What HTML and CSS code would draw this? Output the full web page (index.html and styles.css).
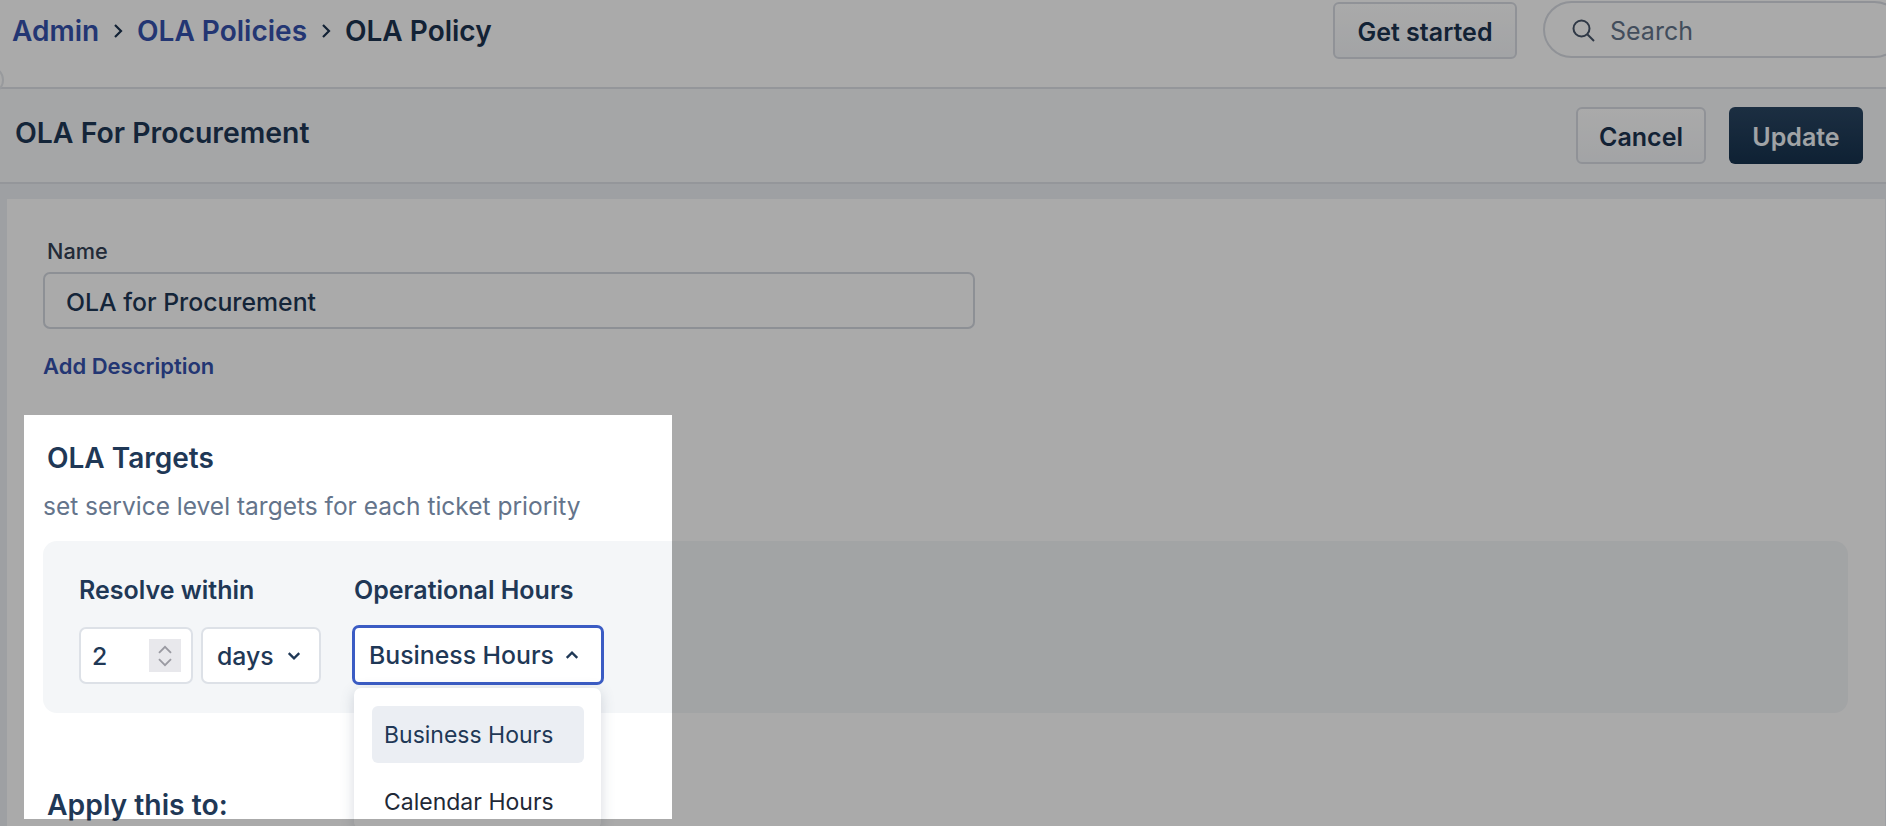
FILE: index.html
```html
<!DOCTYPE html>
<html lang="en">
<head>
  <meta charset="UTF-8">
  <title>OLA Policy</title>
  <link rel="stylesheet" href="styles.css">
</head>
<body>

  <div class="page">
    <header class="topbar">
      <nav class="crumbs">
        <a class="crumb-link">Admin</a>
        <svg class="crumb-sep" viewBox="0 0 12 16"><path d="M3 2l6 6-6 6"/></svg>
        <a class="crumb-link">OLA Policies</a>
        <svg class="crumb-sep" viewBox="0 0 12 16"><path d="M3 2l6 6-6 6"/></svg>
        <span class="crumb-current">OLA Policy</span>
      </nav>
      <button class="btn btn-started">Get started</button>
      <div class="search">
        <svg class="search-icon" viewBox="0 0 24 24"><circle cx="10.5" cy="10.5" r="8"/><path d="M16.5 16.5L23 23"/></svg>
        <span>Search</span>
      </div>
      <span class="collapse-handle"></span>
    </header>

    <section class="title-bar">
      <h1>OLA For Procurement</h1>
      <button class="btn btn-cancel">Cancel</button>
      <button class="btn btn-update">Update</button>
    </section>

    <main class="panel">
      <label class="name-label">Name</label>
      <div class="name-input">OLA for Procurement</div>
      <a class="add-desc">Add Description</a>

      <h2 class="targets-title">OLA Targets</h2>
      <p class="targets-sub">set service level targets for each ticket priority</p>

      <div class="targets-box">
        <div class="field">
          <div class="field-label">Resolve within</div>
          <div class="field-row">
            <div class="control number">
              <span>2</span>
              <span class="stepper">
                <svg viewBox="0 0 12 8"><path d="M1.500 6.500L6 2l4.500 4.500"/></svg>
                <svg viewBox="0 0 12 8"><path d="M1.500 1.500L6 6l4.500-4.500"/></svg>
              </span>
            </div>
            <div class="control unit">
              <span>days</span>
              <svg class="chev" viewBox="0 0 12 8"><path d="M1.500 1.500L6 6l4.500-4.500"/></svg>
            </div>
          </div>
        </div>
        <div class="field hours">
          <div class="field-label">Operational Hours</div>
          <div class="control select-open">
            <span>Business Hours</span>
            <svg class="chev" viewBox="0 0 12 8"><path d="M1.500 6.500L6 2l4.500 4.500"/></svg>
            <ul class="dropdown">
              <li class="option option-active">Business Hours</li>
              <li class="option">Calendar Hours</li>
            </ul>
          </div>
        </div>
      </div>

      <h2 class="apply-title">Apply this to:</h2>
    </main>
  </div>

  <!-- dims everything outside the highlighted area -->
  <div class="spotlight"></div>

</body>
</html>
```

FILE: styles.css
```css
* {
  box-sizing: border-box;
}

html,
body {
  margin: 0;
  height: 826px;
  overflow: hidden;
}

body {
  font-family: Inter, "Liberation Sans", sans-serif;
  color: #1f3856;
  background-color: #fff;
}

.page {
  display: flex;
  flex-direction: column;
  height: 826px;
  overflow: hidden;
  background-color: #eef0f5;
}

/* top bar */
.topbar {
  position: relative;
  display: flex;
  align-items: flex-start;
  height: 89px;
  padding: 1px 0 0 12px;
  background-color: #fff;
  border-bottom: 2px solid #dfe2e8;
}

.crumbs {
  display: flex;
  align-items: center;
  gap: 13px;
  flex: 1;
  height: 58px;
  padding-top: 1px;
  font-size: 28px;
  font-weight: 600;
}

.crumb-link {
  color: #3552ad;
}

.crumb-current {
  color: #1c3350;
}

.crumb-sep {
  width: 12px;
  height: 16px;
  fill: none;
  stroke: #1c3350;
  stroke-width: 2.2;
}

.btn {
  font-family: inherit;
  font-size: 25px;
  font-weight: 600;
  height: 57px;
  padding: 2px 0 0;
  border-radius: 6px;
  color: #1c3350;
  background: linear-gradient(#fff, #f4f6f9);
  border: 2px solid #d8dce3;
}

.btn-started {
  width: 184px;
  margin-top: 1px;
  margin-right: 26px;
}

.search {
  display: flex;
  align-items: center;
  gap: 15px;
  width: 360px;
  height: 57px;
  margin-right: -17px;
  padding: 3px 0 0 26px;
  font-size: 25px;
  color: #64748b;
  background-color: #fff;
  border: 2px solid #d8dce3;
  border-radius: 29px;
}

.search-icon {
  width: 24px;
  height: 24px;
  margin-top: -3px;
  fill: none;
  stroke: #475569;
  stroke-width: 2;
}

.collapse-handle {
  position: absolute;
  left: -24px;
  top: 66px;
  width: 28px;
  height: 28px;
  background-color: #fff;
  border: 2px solid #e4e7ec;
  border-radius: 50%;
}

/* title row */
.title-bar {
  display: flex;
  align-items: center;
  height: 95px;
  padding: 0 23px 0 15px;
  background-color: #f8f9fb;
  border-bottom: 2px solid #dfe2e8;
}

.title-bar h1 {
  flex: 1;
  margin: 0 0 7px;
  font-size: 28.4px;
  font-weight: 600;
}

.btn-cancel {
  width: 130px;
  margin-right: 23px;
}

.btn-update {
  width: 134px;
  color: #f1f5f9;
  background: linear-gradient(#2a4663, #16324e);
  border: none;
}

/* form */
.panel {
  flex: 1;
  margin: 15px 1px 0 7px;
  padding: 40px 0 0 36px;
  background-color: #fff;
}

.name-label {
  display: block;
  margin-left: 4px;
  font-size: 21.7px;
  font-weight: 500;
  line-height: 24px;
  color: #334155;
}

.name-input {
  display: flex;
  align-items: center;
  width: 932px;
  height: 57px;
  margin-top: 9px;
  padding: 2px 0 0 21px;
  font-size: 24.8px;
  font-weight: 500;
  border: 2px solid #d4d8e0;
  border-radius: 7px;
}

.add-desc {
  display: block;
  margin-top: 24px;
  font-size: 22px;
  font-weight: 600;
  line-height: 26px;
  color: #3552ad;
}

.targets-title {
  margin: 63px 0 0 4px;
  font-size: 28px;
  font-weight: 600;
  line-height: 33px;
}

.targets-sub {
  margin: 17px 0 0;
  font-size: 24.5px;
  line-height: 29px;
  color: #64748b;
}

.targets-box {
  display: flex;
  gap: 33px;
  width: 1805px;
  height: 172px;
  margin-top: 20px;
  padding: 34px 0 0 36px;
  background-color: #f4f6f8;
  border-radius: 14px;
}

.field-label {
  font-size: 25px;
  font-weight: 600;
  line-height: 30px;
}

.field-row {
  display: flex;
  gap: 8px;
  margin-top: 22px;
}

.control {
  display: flex;
  align-items: center;
  height: 57px;
  font-size: 24.8px;
  font-weight: 500;
  background-color: #fff;
  border: 2px solid #dde1e7;
  border-radius: 7px;
}

.number {
  justify-content: space-between;
  width: 114px;
  padding: 0 10px 0 11px;
}

.stepper {
  display: flex;
  flex-direction: column;
  align-items: center;
  justify-content: center;
  gap: 2px;
  width: 32px;
  height: 33px;
  background-color: #e8e8ec;
}

.stepper svg {
  width: 16px;
  height: 11px;
  fill: none;
  stroke: #9a9aa2;
  stroke-width: 1.4;
}

.unit {
  gap: 13px;
  width: 120px;
  padding-left: 14px;
}

.chev {
  width: 14px;
  height: 10px;
  fill: none;
  stroke: #1f3856;
  stroke-width: 2;
}

.select-open {
  position: relative;
  gap: 11px;
  width: 252px;
  height: 60px;
  margin-top: 20px;
  margin-left: -2px;
  padding-left: 14px;
  border: 3px solid #3b5cc4;
}

.dropdown {
  position: absolute;
  left: -1px;
  top: 60px;
  width: 247px;
  height: 141px;
  margin: 0;
  padding: 18px 17px 0 18px;
  overflow: hidden;
  list-style: none;
  background-color: #fff;
  border-radius: 7px;
  box-shadow: 0 3px 14px rgba(70, 85, 110, 0.22);
}

.option {
  display: flex;
  align-items: center;
  height: 57px;
  margin-bottom: 10px;
  padding: 1px 0 0 12px;
  font-size: 23px;
  font-weight: 400;
  color: #1f2937;
  border-radius: 6px;
}

.option-active {
  color: #1f3856;
  background-color: #ebeef3;
}

.apply-title {
  margin: 76px 0 0 4px;
  font-size: 28.3px;
  font-weight: 600;
  line-height: 33px;
}

/* highlighted area */
.spotlight {
  position: absolute;
  left: 24px;
  top: 415px;
  width: 648px;
  height: 404px;
  pointer-events: none;
  box-shadow: 0 0 0 2000px rgba(0, 0, 0, 0.333);
}
```
